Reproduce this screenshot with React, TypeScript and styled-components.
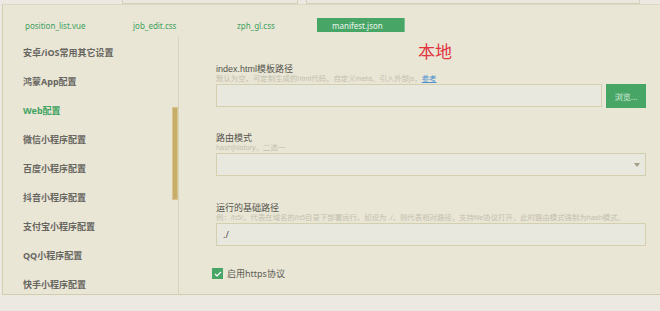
import React from "react";
import styled, { createGlobalStyle } from "styled-components";

const Global = createGlobalStyle`
  html, body { margin: 0; padding: 0; background: #ebe9e2; }
  body { font-family: "Noto Sans", "Noto Sans CJK SC", sans-serif; }
  * { box-sizing: border-box; }
`;

const Page = styled.div`
  width: 660px;
  height: 311px;
  display: flex;
  flex-direction: column;
  background: #ebe9e2;
  overflow: hidden;
`;

const TopStrip = styled.div`
  height: 4px;
  display: flex;
  background: #ebe9e2;
`;

const StripBox = styled.div<{ $left: number; $width: number }>`
  margin-left: ${(p) => p.$left}px;
  width: ${(p) => p.$width}px;
  height: 4px;
  border: 1px solid #d6d1b8;
  border-top: none;
  background: #eae8de;
`;

const Main = styled.div`
  height: 291px;
  margin-left: 2px;
  border-left: 1px solid #d3ceb1;
  border-top: 1px solid #dcd7c1;
  border-bottom: 1px solid #d2cdaf;
  background: #e9e6d6;
  display: flex;
  flex-direction: column;
`;

const TabBar = styled.div`
  height: 32px;
  display: flex;
  align-items: center;
  padding-left: 7px;
`;

const Tab = styled.div<{ $w: number; $active?: boolean }>`
  width: ${(p) => p.$w}px;
  height: 14px;
  padding-left: 15px;
  display: flex;
  align-items: center;
  font-size: 8px;
  color: ${(p) => (p.$active ? "#eef6ee" : "#3e9f5e")};
  background: ${(p) => (p.$active ? "#47a566" : "transparent")};
  border-right: ${(p) => (p.$active ? "1px solid #7cc08f" : "none")};
  margin-top: 8px;
`;

const Body = styled.div`
  flex: 1;
  display: flex;
  min-height: 0;
`;

const Sidebar = styled.div`
  position: relative;
  width: 176px;
  padding-top: 1px;
  border-right: 1px solid #d8d3bd;
  overflow: hidden;
`;

const NavItem = styled.div<{ $active?: boolean }>`
  height: 29px;
  display: flex;
  align-items: center;
  padding-left: 20px;
  font-size: 9px;
  font-weight: bold;
  color: ${(p) => (p.$active ? "#3fa35f" : "#67655f")};
`;

const Thumb = styled.div`
  position: absolute;
  right: 0;
  top: 70px;
  width: 6px;
  height: 93px;
  background: #c6ad68;
  border: 1px solid #d8c48e;
`;

const Content = styled.div`
  flex: 1;
  padding: 4px 14px 0 37px;
  display: flex;
  flex-direction: column;
`;

const Title = styled.div`
  text-align: center;
  font-size: 17px;
  line-height: 20px;
  color: #e2343f;
  padding-left: 8px;
  font-family: "Noto Sans CJK SC", sans-serif;
`;

const Label = styled.div<{ $mt: number }>`
  margin-top: ${(p) => p.$mt}px;
  font-family: "Liberation Sans", "Noto Sans CJK SC", sans-serif;
  font-size: 9px;
  line-height: 10px;
  color: #57554f;
`;

const Hint = styled.div`
  font-family: "Liberation Sans", "Noto Sans CJK SC", sans-serif;
  font-size: 7.4px;
  line-height: 9px;
  color: #c4c0ad;
  white-space: nowrap;
`;

const Link = styled.span`
  color: #4a8fd0;
  text-decoration: underline;
`;

const Row = styled.div`
  display: flex;
  gap: 4px;
  margin-top: 1px;
`;

const Field = styled.div`
  flex: 1;
  height: 23px;
  border: 1px solid #d4cfae;
  background: #e9e8df;
  position: relative;
  display: flex;
  align-items: center;
  padding-left: 6px;
  font-size: 9px;
  color: #4b4944;
`;

const Arrow = styled.div`
  position: absolute;
  right: 5px;
  top: 9px;
  width: 0;
  height: 0;
  border-left: 3px solid transparent;
  border-right: 3px solid transparent;
  border-top: 4px solid #a39e88;
`;

const Button = styled.div`
  width: 40px;
  height: 24px;
  background: #47a566;
  color: #d8ecdb;
  font-size: 8px;
  display: flex;
  align-items: center;
  justify-content: center;
`;

const CheckRow = styled.div`
  margin-top: 21px;
  margin-left: -4px;
  display: flex;
  align-items: center;
  gap: 4px;
  font-size: 9px;
  color: #5e5c55;
`;

const Box = styled.div`
  width: 11px;
  height: 11px;
  background: #47a566;
  display: flex;
  align-items: center;
  justify-content: center;
`;

const navs = [
  "安卓/iOS常用其它设置",
  "鸿蒙App配置",
  "Web配置",
  "微信小程序配置",
  "百度小程序配置",
  "抖音小程序配置",
  "支付宝小程序配置",
  "QQ小程序配置",
  "快手小程序配置",
];

export default function App() {
  return (
    <Page>
      <Global />
      <TopStrip>
        <StripBox $left={122} $width={176} />
        <StripBox $left={8} $width={334} />
      </TopStrip>
      <Main>
        <TabBar>
          <Tab $w={108}>position_list.vue</Tab>
          <Tab $w={104}>job_edit.css</Tab>
          <Tab $w={95}>zph_gl.css</Tab>
          <Tab $w={88} $active>
            manifest.json
          </Tab>
        </TabBar>
        <Body>
          <Sidebar>
            {navs.map((n) => (
              <NavItem key={n} $active={n === "Web配置"}>
                {n}
              </NavItem>
            ))}
            <Thumb />
          </Sidebar>
          <Content>
            <Title>本地</Title>
            <Label $mt={3}>index.html模板路径</Label>
            <Hint>
              默认为空，可定制生成的html代码，自定义meta、引入外部js，<Link>参考</Link>
            </Hint>
            <Row>
              <Field />
              <Button>浏览...</Button>
            </Row>
            <Label $mt={25}>路由模式</Label>
            <Hint>hash|history，二选一</Hint>
            <Row>
              <Field>
                <Arrow />
              </Field>
            </Row>
            <Label $mt={27}>运行的基础路径</Label>
            <Hint>
              例：/h5/，代表在域名的/h5目录下部署运行。如设为 ./，则代表相对路径，支持file协议打开，此时路由模式强制为hash模式。
            </Hint>
            <Row>
              <Field>./</Field>
            </Row>
            <CheckRow>
              <Box>
                <svg width="8" height="6" viewBox="0 0 8 6">
                  <path d="M1 3 L3 5 L7 1" stroke="#fff" strokeWidth="1.2" fill="none" />
                </svg>
              </Box>
              启用https协议
            </CheckRow>
          </Content>
        </Body>
      </Main>
    </Page>
  );
}
